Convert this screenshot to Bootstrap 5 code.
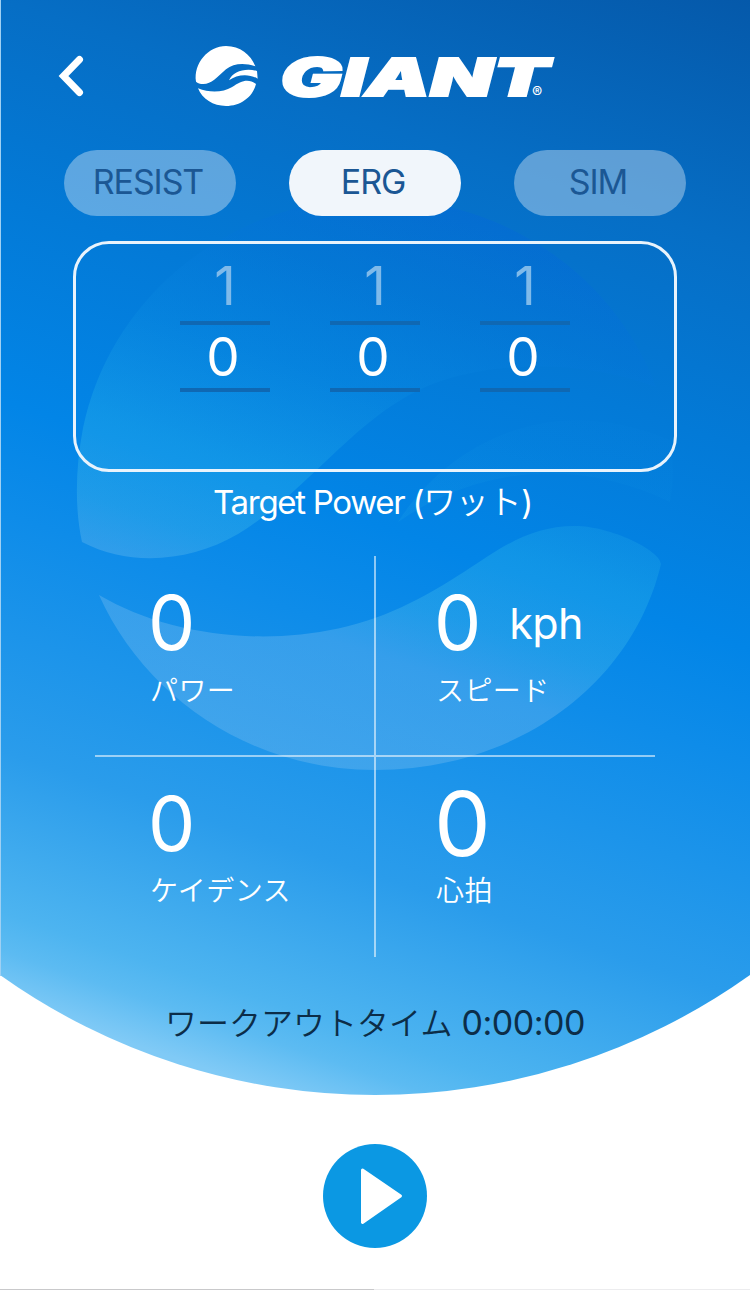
<!DOCTYPE html>
<html lang="ja">
<head>
<meta charset="utf-8">
<meta name="viewport" content="width=device-width, initial-scale=1">
<title>GIANT Trainer</title>
<link href="https://cdn.jsdelivr.net/npm/bootstrap@5.3.0/dist/css/bootstrap.min.css" rel="stylesheet">
<style>
body{font-family:Inter,"Noto Sans CJK JP",sans-serif;background:#fff}
.screen{width:750px;height:1290px}
.backdrop{z-index:0}
.layer{z-index:1}
.topbar{height:150px;padding:40px 0 0 55px}
.back-btn{width:32px;height:70px;margin-right:103px}
.modes{padding:0 64px;height:66px}
.pill{width:172px;height:66px;border:0;border-radius:33px;background:rgba(240,245,250,.38);color:#1b5794;font-size:34px;line-height:64px;letter-spacing:-1.1px;padding:0 4px 2px 0;opacity:1}
.pill.on{background:#f1f6fb;color:#1b5794}
.target{margin:25px 73px 0;height:231px;border:3px solid #e9f3fc;border-radius:36px;gap:60px}
.wheel{width:90px;font-size:53px;line-height:63px;text-align:center}
.wheel .prev{height:77px;padding-top:11px;color:#7fbaea}
.wheel .now{height:71px;padding:1px 4px 0 0;border-top:4px solid #0f68b3;border-bottom:4px solid #0f68b3}
.caption{height:84px;padding:7px 5px 0 0;font-size:33px;line-height:46px;letter-spacing:-1.3px;font-weight:400}
.jp{font-weight:350}
.caption .jp{letter-spacing:-.3px}
.stats{width:560px;height:401px;margin:0 95px}
.cell{height:201px;padding-left:55px}
.cell.low{height:200px}
.cell.right{padding-left:60px}
.r-line{border-right:1px solid rgba(255,255,255,.55)}
.l-line{border-left:1px solid rgba(255,255,255,.55)}
.b-line{border-bottom:2px solid rgba(255,255,255,.55)}
.num{font-size:75px;line-height:88px;height:114px;padding-top:23px;margin-left:-2px;font-weight:400}
.low .num{height:113px}
.num.big{font-size:90px}
.unit{font-size:43px;font-weight:400;margin-left:28px;letter-spacing:-.6px}
.lbl{font-size:28px;line-height:42px;font-weight:350;letter-spacing:.4px}
.timer{height:133px;padding-top:43px;font-size:34px;line-height:46px;color:#0c2d48;letter-spacing:-.5px}
.timer .jp{font-size:32px;letter-spacing:0}
.play{padding-top:54px}
</style>
</head>
<body>
<main class="screen position-relative overflow-hidden">
<svg class="backdrop position-absolute top-0 start-0" width="750" height="1290" viewBox="0 0 750 1290" aria-hidden="true">
<defs>
<linearGradient id="sky" gradientUnits="userSpaceOnUse" x1="750" y1="0" x2="375" y2="1125">
<stop offset="0" stop-color="#0559aa"/><stop offset=".2" stop-color="#066ec5"/><stop offset=".36" stop-color="#037ad7"/><stop offset=".52" stop-color="#0285e7"/><stop offset=".61" stop-color="#0e8ce9"/><stop offset=".8" stop-color="#2a9ceb"/><stop offset=".93" stop-color="#4db4f0"/><stop offset=".96" stop-color="#5cbbf2"/><stop offset="1" stop-color="#80caf6"/>
</linearGradient>
<linearGradient id="lobe" gradientUnits="userSpaceOnUse" x1="640" y1="210" x2="480" y2="690">
<stop offset="0" stop-color="#0050f0" stop-opacity=".22"/><stop offset=".3" stop-color="#0474dc" stop-opacity=".2"/><stop offset=".5" stop-color="#1094e4" stop-opacity=".22"/><stop offset=".72" stop-color="#38c4ea" stop-opacity=".26"/><stop offset=".88" stop-color="#50c4ea" stop-opacity=".3"/><stop offset="1" stop-color="#8cc6f0" stop-opacity=".3"/>
</linearGradient>
</defs>
<path d="M0 0H750V975A646 646 0 0 1 0 975Z" fill="url(#sky)"/>
<g fill="url(#lobe)">
<path d="M82 542C75 510 75 470 83 428A298 285 0 0 1 656 387C590 362 500 358 430 385C355 416 310 490 238 534C190 562 130 567 82 542Z"/>
<path d="M398 522C440 455 540 385 670 440Q676 470 670 502C580 458 480 465 398 522Z" opacity=".4"/>
<path d="M99 595C180 643 310 654 410 603C480 570 510 526 575 526C610 526 660 550 661 564C632 686 515 770 375 770C250 770 145 697 99 595Z"/>
</g>
<path d="M.5 0V976" stroke="#9fd0f3" stroke-width="1"/>
<path d="M0 1289.5H374" stroke="#c9c9cb"/><path d="M374 1289.5H750" stroke="#ececee"/>
</svg>

<div class="layer position-relative text-white">
<header class="topbar d-flex">
<button class="back-btn btn p-0 border-0 d-block" aria-label="戻る">
<svg class="d-block" width="32" height="70" viewBox="55 40 32 70"><path d="M79.5 59.5L63.5 76L79.5 92.5" fill="none" stroke="#fff" stroke-width="7" stroke-linecap="round"/></svg>
</button>
<svg class="d-block" width="370" height="70" viewBox="30 15 1110 210" fill="#fff" role="img" aria-label="GIANT">
<path d="M48 140C40 85 85 33 138 33C180 33 212 58 226 94C190 82 160 86 138 103C110 128 95 147 70 147C60 147 53 144 48 140Z"/>
<path d="M147 136C158 110 195 98 231 108L233 131C205 114 170 119 147 136Z"/>
<path d="M54 160C90 175 130 172 155 157C185 136 205 130 228 147C218 188 180 213 138 213C100 213 66 192 54 160Z"/>
<text x="301" y="182" font-family="Inter" font-weight="900" font-style="italic" font-size="155" textLength="806" lengthAdjust="spacingAndGlyphs" stroke="#fff" stroke-width="6">GIANT</text>
<text x="1056" y="190" font-family="Inter" font-weight="500" font-size="46">®</text>
</svg>
</header>

<nav class="modes d-flex justify-content-between">
<button class="btn pill">RESIST</button>
<button class="btn pill on">ERG</button>
<button class="btn pill">SIM</button>
</nav>

<section class="target d-flex justify-content-center">
<div class="wheel"><div class="prev">1</div><div class="now">0</div></div>
<div class="wheel"><div class="prev">1</div><div class="now">0</div></div>
<div class="wheel"><div class="prev">1</div><div class="now">0</div></div>
</section>
<div class="caption text-center">Target Power (<span class="jp">ワット</span>)</div>

<section class="stats row g-0">
<div class="col-6 cell r-line b-line"><div class="num">0</div><div class="lbl">パワー</div></div>
<div class="col-6 cell right l-line b-line"><div class="num d-flex">0<span class="unit">kph</span></div><div class="lbl">スピード</div></div>
<div class="col-6 cell low r-line"><div class="num">0</div><div class="lbl">ケイデンス</div></div>
<div class="col-6 cell low right l-line"><div class="num big">0</div><div class="lbl">心拍</div></div>
</section>
<div class="timer text-center"><span class="jp">ワークアウトタイム</span> 0:00:00</div>

<div class="play d-flex justify-content-center">
<button class="btn p-0 border-0" aria-label="開始">
<svg class="d-block" width="104" height="104" viewBox="0 0 104 104"><circle cx="52" cy="52" r="52" fill="#0b98e3"/><path d="M39.500 26L77.500 52L39.500 78.500Z" fill="#fff" stroke="#fff" stroke-width="3" stroke-linejoin="round"/></svg>
</button>
</div>
</div>
</main>
<script src="https://cdn.jsdelivr.net/npm/bootstrap@5.3.0/dist/js/bootstrap.bundle.min.js"></script>
</body>
</html>
